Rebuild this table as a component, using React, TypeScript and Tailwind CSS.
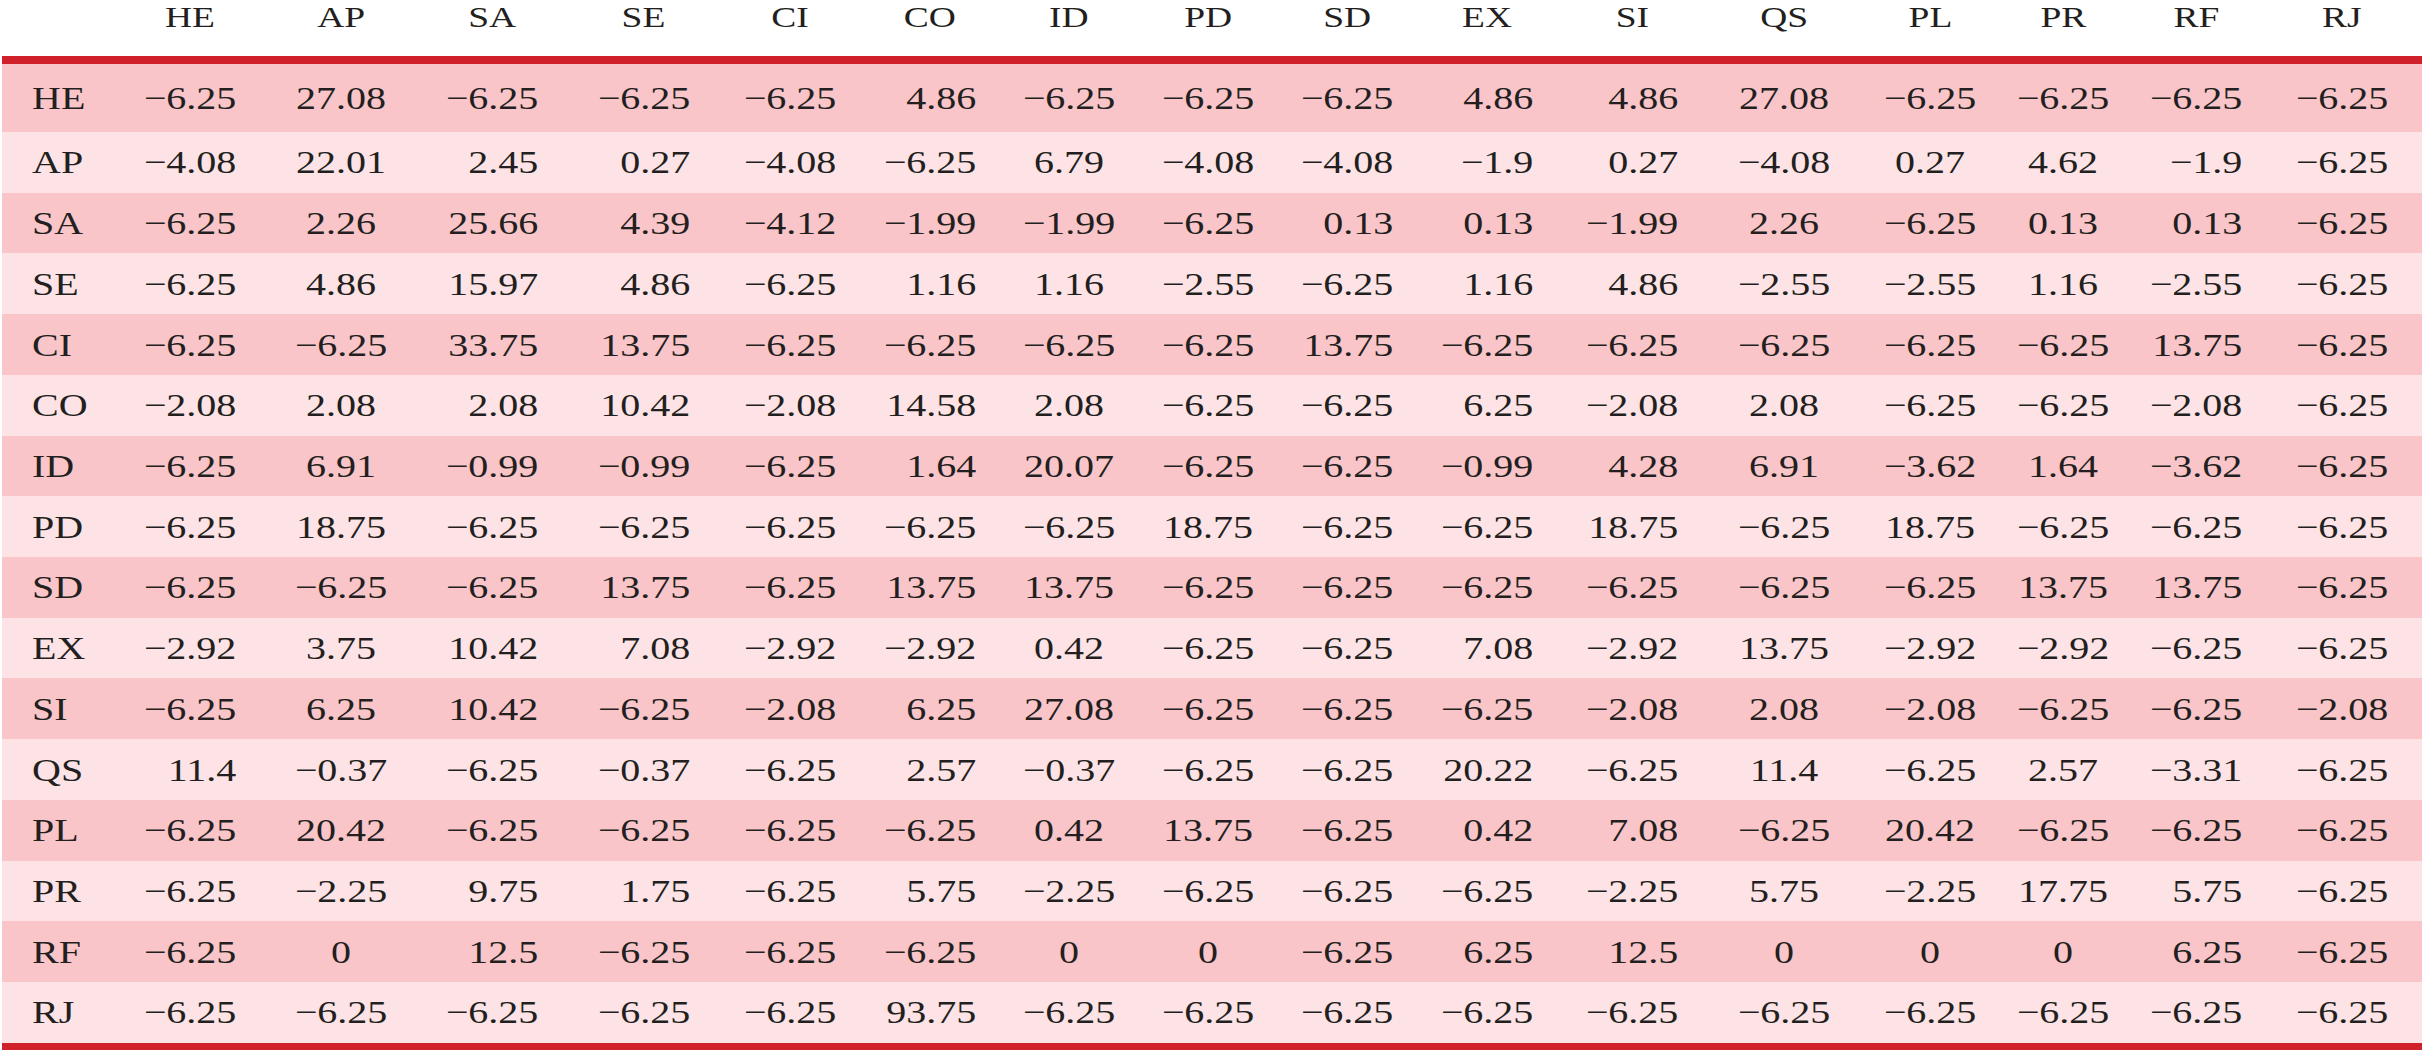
const cols =
  "grid grid-cols-[112.5px_151px_151px_151.5px_152px_140px_139.5px_139px_139px_139.5px_139.5px_151.5px_152.5px_139.5px_126.5px_139.5px_152px]";

const heads = ["HE", "AP", "SA", "SE", "CI", "CO", "ID", "PD", "SD", "EX", "SI", "QS", "PL", "PR", "RF", "RJ"];

// columns whose values sit centred in the cell; the rest are right aligned
const centred = [1, 6, 7, 11, 12, 13];

const rows: string[][] = [
  ["HE", "−6.25", "27.08", "−6.25", "−6.25", "−6.25", "4.86", "−6.25", "−6.25", "−6.25", "4.86", "4.86", "27.08", "−6.25", "−6.25", "−6.25", "−6.25"],
  ["AP", "−4.08", "22.01", "2.45", "0.27", "−4.08", "−6.25", "6.79", "−4.08", "−4.08", "−1.9", "0.27", "−4.08", "0.27", "4.62", "−1.9", "−6.25"],
  ["SA", "−6.25", "2.26", "25.66", "4.39", "−4.12", "−1.99", "−1.99", "−6.25", "0.13", "0.13", "−1.99", "2.26", "−6.25", "0.13", "0.13", "−6.25"],
  ["SE", "−6.25", "4.86", "15.97", "4.86", "−6.25", "1.16", "1.16", "−2.55", "−6.25", "1.16", "4.86", "−2.55", "−2.55", "1.16", "−2.55", "−6.25"],
  ["CI", "−6.25", "−6.25", "33.75", "13.75", "−6.25", "−6.25", "−6.25", "−6.25", "13.75", "−6.25", "−6.25", "−6.25", "−6.25", "−6.25", "13.75", "−6.25"],
  ["CO", "−2.08", "2.08", "2.08", "10.42", "−2.08", "14.58", "2.08", "−6.25", "−6.25", "6.25", "−2.08", "2.08", "−6.25", "−6.25", "−2.08", "−6.25"],
  ["ID", "−6.25", "6.91", "−0.99", "−0.99", "−6.25", "1.64", "20.07", "−6.25", "−6.25", "−0.99", "4.28", "6.91", "−3.62", "1.64", "−3.62", "−6.25"],
  ["PD", "−6.25", "18.75", "−6.25", "−6.25", "−6.25", "−6.25", "−6.25", "18.75", "−6.25", "−6.25", "18.75", "−6.25", "18.75", "−6.25", "−6.25", "−6.25"],
  ["SD", "−6.25", "−6.25", "−6.25", "13.75", "−6.25", "13.75", "13.75", "−6.25", "−6.25", "−6.25", "−6.25", "−6.25", "−6.25", "13.75", "13.75", "−6.25"],
  ["EX", "−2.92", "3.75", "10.42", "7.08", "−2.92", "−2.92", "0.42", "−6.25", "−6.25", "7.08", "−2.92", "13.75", "−2.92", "−2.92", "−6.25", "−6.25"],
  ["SI", "−6.25", "6.25", "10.42", "−6.25", "−2.08", "6.25", "27.08", "−6.25", "−6.25", "−6.25", "−2.08", "2.08", "−2.08", "−6.25", "−6.25", "−2.08"],
  ["QS", "11.4", "−0.37", "−6.25", "−0.37", "−6.25", "2.57", "−0.37", "−6.25", "−6.25", "20.22", "−6.25", "11.4", "−6.25", "2.57", "−3.31", "−6.25"],
  ["PL", "−6.25", "20.42", "−6.25", "−6.25", "−6.25", "−6.25", "0.42", "13.75", "−6.25", "0.42", "7.08", "−6.25", "20.42", "−6.25", "−6.25", "−6.25"],
  ["PR", "−6.25", "−2.25", "9.75", "1.75", "−6.25", "5.75", "−2.25", "−6.25", "−6.25", "−6.25", "−2.25", "5.75", "−2.25", "17.75", "5.75", "−6.25"],
  ["RF", "−6.25", "0", "12.5", "−6.25", "−6.25", "−6.25", "0", "0", "−6.25", "6.25", "12.5", "0", "0", "0", "6.25", "−6.25"],
  ["RJ", "−6.25", "−6.25", "−6.25", "−6.25", "−6.25", "93.75", "−6.25", "−6.25", "−6.25", "−6.25", "−6.25", "−6.25", "−6.25", "−6.25", "−6.25", "−6.25"],
];

function Value({ text, centre }: { text: string; centre: boolean }) {
  return (
    <div className="flex items-center justify-center">
      <span
        className={
          "inline-block w-[74px] scale-x-[1.25] origin-center leading-[32px] whitespace-nowrap " +
          (centre ? "text-center" : "text-right")
        }
      >
        {text}
      </span>
    </div>
  );
}

export default function App() {
  return (
    <div className="w-[2422px] h-[1050px] overflow-hidden bg-white text-[#231f20] font-[family-name:'Liberation_Serif',serif]">
      <div className="ml-[2px] w-[2420px]">
        <div className={cols + " h-[56px] pt-[2px] text-[30px] leading-[30px]"}>
          <div />
          {heads.map((h) => (
            <div key={h} className="flex justify-center">
              <span className="inline-block scale-x-[1.25] origin-center">{h}</span>
            </div>
          ))}
        </div>
        <div className="h-[8px] bg-[#d0202a]" />

        {rows.map((r, i) => (
          <div
            key={r[0]}
            className={
              cols +
              " text-[32px] " +
              (i === 0 ? "h-[68px] " : "h-[60.73px] ") +
              (i % 2 === 0 ? "bg-[#f9c5c9]" : "bg-[#fde3e5]")
            }
          >
            <div className="flex items-center pl-[30px]">
              <span className="inline-block scale-x-[1.25] origin-left leading-[32px]">{r[0]}</span>
            </div>
            {r.slice(1).map((v, j) => (
              <Value key={j} text={v} centre={centred.includes(j)} />
            ))}
          </div>
        ))}

        <div className="h-[7px] bg-[#d0202a]" />
      </div>
    </div>
  );
}
